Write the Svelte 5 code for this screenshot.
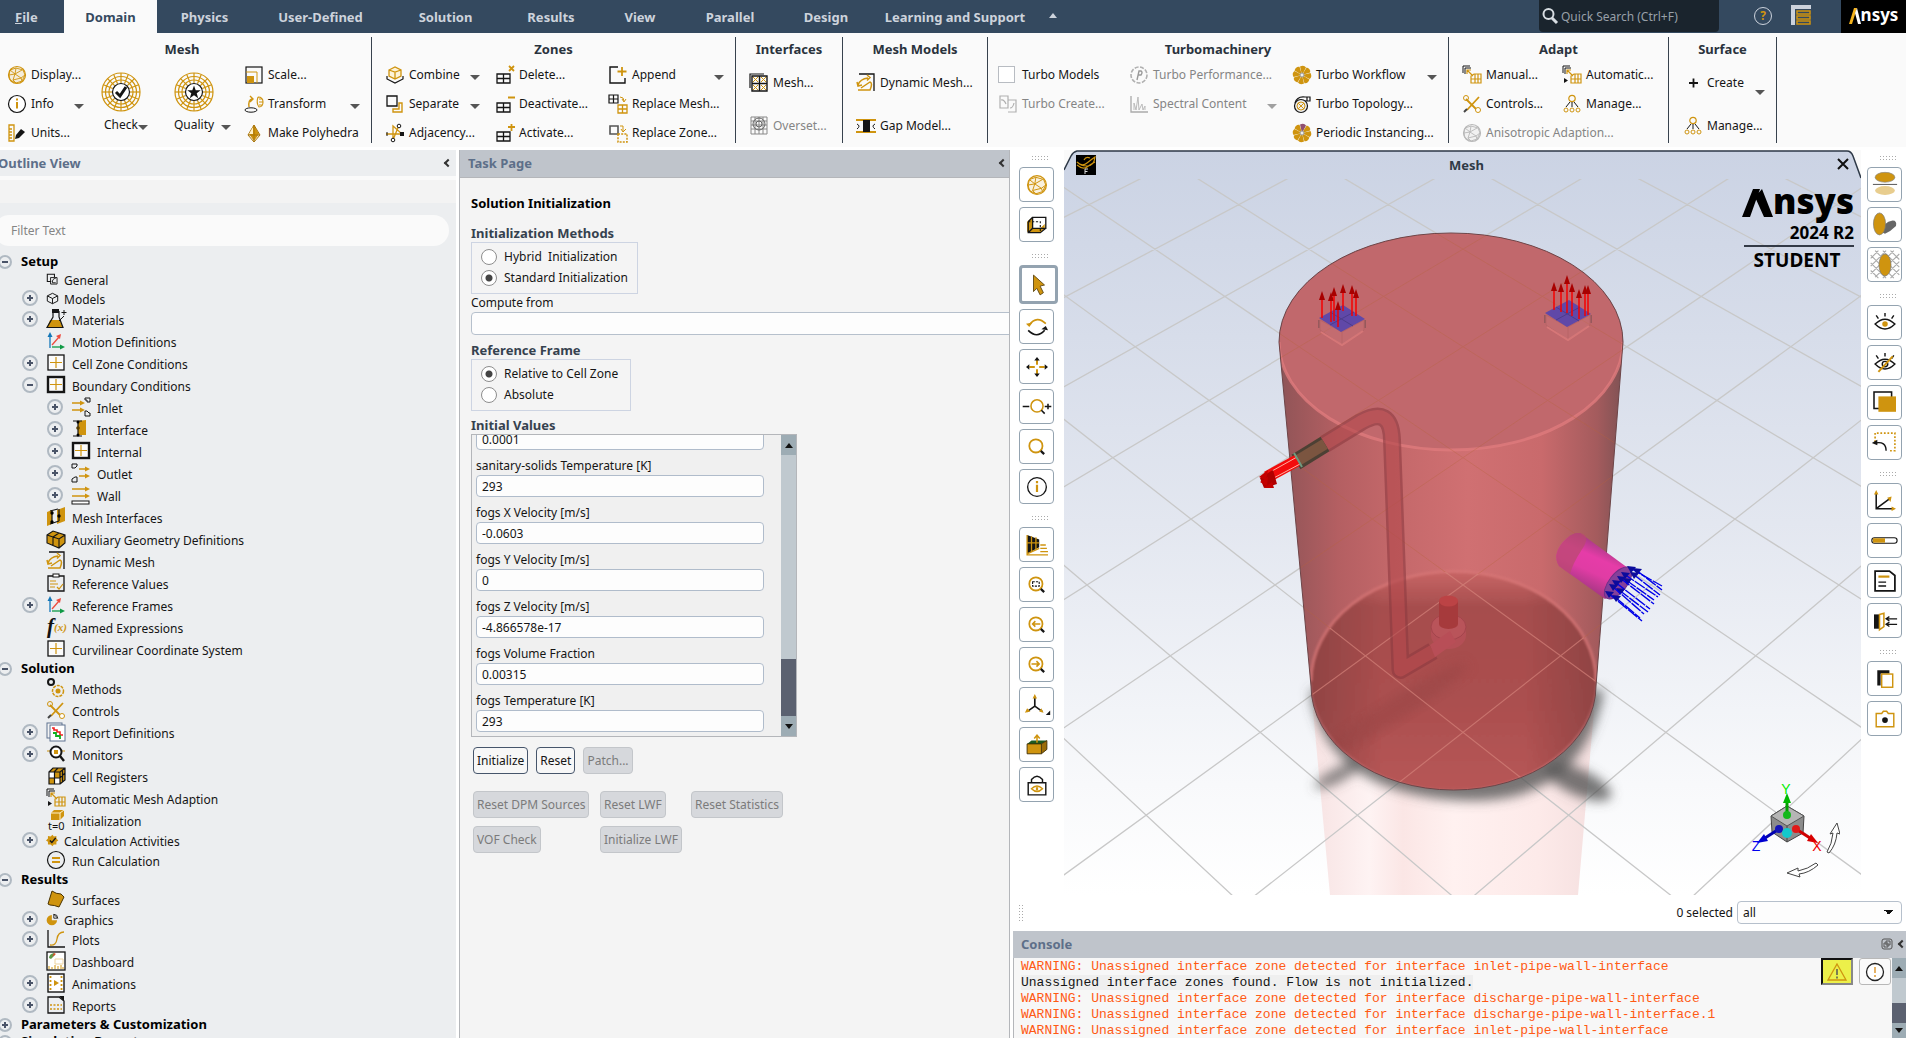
<script lang="ts">
  const G = '#cf940f';
  const K = '#151515';

  const line = (d: string, color = G, width = 1) =>
    `<path d="${d}" fill="none" stroke="${color}" stroke-width="${width}"/>`;
  const fill = (d: string, color = G) => `<path d="${d}" fill="${color}"/>`;
  const grid = (c: string) => line('M2 9h13v9H2zM8.500 9v9M2 13.500h13', c, 1.3);
  const lens = `<circle cx="9" cy="9" r="6" fill="none" stroke="${G}" stroke-width="1.600"/>` + line('M13.500 13.500l3 3', K, 2);

  const fan = (last: string) =>
    [0, 45, 90, 135, 180, 225, 270, 315]
      .map((a) => `<path d="M10 10L8 1.500q4-2 6 1z" fill="${a === 0 ? last : G}" transform="rotate(${a} 10 10)"/>`)
      .join('') + '<circle cx="10" cy="10" r="2" fill="#eee" stroke="#999"/>';

  const sphere = (c: string) =>
    `<circle cx="10" cy="10" r="8.500" fill="${c}22" stroke="${c}" stroke-width="1.200"/>` +
    line('M3 5l6-2 7 2 2 5-3 6-6 2-6-3-1-5zM3 5l5 4 1-6M8 9l7-4M8 9l6 4 4-3M14 13l1 3M8 9l-2 6 8-2M2 10l6-1M6 15l3 3', c, 0.9);

  const web = (mark: string) =>
    [19, 15.5, 12].map((r) => `<circle cx="20" cy="20" r="${r}" fill="none" stroke="${G}" stroke-width="1.200"/>`).join('') +
    Array.from({ length: 16 }, (_, i) => `<path d="M20 1v10" stroke="${G}" stroke-width="1.200" transform="rotate(${i * 22.5} 20 20)"/>`).join('') +
    `<circle cx="20" cy="20" r="8.500" fill="#fff" stroke="${K}" stroke-width="1.200"/>` + mark;

  const adapt = line('M1 8V1h7M3 9V3h6', K) + line('M5 5l6 6M5 9V5h4M9 18V11l3-2h7v9zM9 14h10M13 9v9M16 9v9', G, 1.2);
  const tools = line('M4 5l12 12M5 16L17 3', G, 1.8) + line('M2 18l3-3', '#444', 2) +
    `<circle cx="4" cy="4" r="2.500" fill="none" stroke="${G}"/><circle cx="16" cy="16" r="2.500" fill="#fff" stroke="${G}"/>`;
  const tree3 = `<circle cx="10" cy="4.500" r="3.200" fill="none" stroke="${G}" stroke-width="1.200"/>` +
    [4, 10, 16].map((x) => `<circle cx="${x}" cy="16" r="2" fill="none" stroke="${G}"/>`).join('') +
    line('M8 8l-4 5M10 8v5M12 8l4 5', K);
  const axes = line('M4 17V4', '#1477b8', 1.3) + fill('M1.500 6L4 1l2.500 5z', '#1477b8') +
    line('M6 16h9', '#0f9a45', 1.3) + fill('M14 13.500l5 2.500-5 2.500z', '#0f9a45') +
    line('M6 14l7-8', '#ee4b3e', 1.3) + fill('M15 3l-1 5-4-3z', '#ee4b3e');
  const dynamic = line('M3 1h15v17', K, 1.3) + line('M2 17h12q3-7 0-8l-9 6M2 12q2-6 10-7M11 2l3 2.500-3 3M1 9l1 4 4-1', G, 1.5);
  const arrowsR = line('M1 6h11M1 13h11', G, 1.3) + fill('M9 3.500l5 2.500-5 2.500zM9 10.500l5 2.500-5 2.500z');
  const box = (w: number) => `<rect x="2" y="2" width="16" height="15" fill="#fbfbfb" stroke="${K}" stroke-width="${w}"/>` + line('M10 4v11M4 9.500h12', G, 1.2);
  const eye = line('M1 11q9-9 18 0-9 9-18 0zM10 4V1M4 6L2 3M16 6l2-3', K, 1.3);

  const icons: Record<string, string> = {
    sphere: sphere(G),
    info: `<circle cx="10" cy="10" r="8.500" fill="#fff" stroke="${K}" stroke-width="1.200"/>` + fill('M9 8h2v6.500H9zM9 4.500h2v2H9z'),
    units: line('M2 2h5v16H2zM2 6h3M2 9h3M2 12h3M2 15h3', G, 1.3) + fill('M8 16l1-4 5-6 4 3-6 6z', K),
    scale: `<rect x="2" y="2" width="16" height="16" fill="none" stroke="${K}" stroke-width="1.200"/>` + line('M2 7h11v11') + fill('M3 11h7v7H3z'),
    transform: line('M5 13q-1-7 3-8M6 2l3 3-3 3', G, 1.4) + line('M14 3q5 0 5 5t-4 5q-3-4-1-10M15 5h3M15 8h4M15 11h3', G, 1.1) +
      `<ellipse cx="7" cy="16" rx="6" ry="2.200" fill="none" stroke="${K}"/>`,
    poly: fill('M10 2l5 9-5 7-5-7z') + line('M10 2l6 10-6 7-6-7zM4 12h12M10 2v17', '#a8740a', 1) + fill('M9 4L5 11h4z', '#fff0c8'),
    combine: fill('M4 5l6-3 6 3v6l-6 3-6-3z', '#fdf3da') + line('M4 5l6-3 6 3v6l-6 3-6-3zM4 5l6 2 6-2M10 7v7', G, 1.3) + line('M2 11v3l8 4 8-4v-3', K, 1.2),
    separate: line('M2 2h10v10H2z', K, 1.3) + line('M17 9v9H8v-3h6V9z', G, 1.4),
    adjacency: line('M1 11h16L8 3v14L14 2', G, 1.3) + `<circle cx="14" cy="3" r="1.800" fill="#fff" stroke="${K}"/><circle cx="8" cy="17" r="1.800" fill="#fff" stroke="${K}"/>` + fill('M15 9h4v4h-4z', K) + line('M2 9v4', K),
    delete: grid(K) + line('M14 1l5 5M19 1l-5 5', G, 1.8),
    deactivate: grid(K) + line('M13 3.500h7', G, 2),
    activate: grid(K) + line('M13 4h7M16.500 1v7', G, 1.8),
    append: line('M10 2H2v16h15v-5', K, 1.4) + line('M14 2v9M9.500 6.500h9', G, 1.8),
    rmesh: line('M1 1h9v8H1zM5.500 1v8M1 5h9', K, 1.2) + line('M10 11h9v8h-9zM14.500 11v8M10 15h9', G, 1.3) + line('M12 3q4 0 4 4M14 5l2 3 2-3', G),
    rzone: line('M2 3h8v8H2z', '#555', 1.6) + `<path d="M10 11h9v8h-9z" fill="none" stroke="${G}" stroke-width="1.500" stroke-dasharray="2 1.200"/>` + line('M12 3h3v5M13 6l2 3 3-3', G),
    imesh: line('M1 15V1h14', K, 1.2) + line('M3 3h15v15H3zM10.500 3v15M3 10.500h15', K, 1.4) + line('M4 4l5 5M9 4L4 9M12 4l5 5M17 4l-5 5M4 12l5 5M9 12l-5 5M12 12l5 5M17 12l-5 5', G),
    overset: line('M2 1h16v17H2zM2 5h16M2 9h16M2 13h16M6 1v17M10 1v17M14 1v17', '#888') + '<circle cx="10" cy="8" r="6" fill="none" stroke="#666"/><circle cx="10" cy="8" r="3" fill="none" stroke="#666"/>',
    dynamic,
    gap: line('M0 4h20M0 16h20', G, 2) + fill('M7 4h7v12H7z', K) + line('M1 8q4 2 0 5M19 8q-4 2 0 5', K),
    tcreate: line('M2 2h8v12H2zM10 6h8v12h-8M3 6q3-1 5 4M12 14q3 0 4-5', '#b0b0b0', 1.2),
    tperf: '<circle cx="10" cy="10" r="8" fill="none" stroke="#b0b0b0" stroke-width="1.600" stroke-dasharray="4 1.500"/>' + line('M8 15l2-9h2q2 1 0 4H9', '#999', 1.4),
    spectral: line('M2 2v16h17', '#aaa', 1.3) + line('M5 16V9l2 7 2-13 1 13 3-6 1 6 2-4v4', '#bbb'),
    fan: fan(G),
    fan2: fan('#905070'),
    topo: `<circle cx="9" cy="12" r="6.500" fill="#eee" stroke="${K}" stroke-width="1.200"/><circle cx="9" cy="12" r="4" fill="none" stroke="${G}"/>` + line('M3 9q2-7 10-6h5v4h-5M15 3v4', K, 1.2) + line('M6 9l6 6M12 9l-6 6', G),
    adapt,
    adapt2: adapt + fill('M2 13l4 2.500L2 18z', K),
    tools,
    tree3,
    aniso: sphere('#b8b8b8'),
    plus: line('M6 10h9M10.500 5.500v9', K, 1.8),
    general: line('M8 13H2V2h11v4', K, 1.6) + line('M7 7h10v10H7zM15 8q-6 1-5 7h5', K, 1.4),
    models: line('M2 6l8-4 8 4v8l-8 4-8-4zM2 6l8 4 8-4M10 10v8', K, 1.5),
    materials: fill('M4 11h10l3 8H1z') + line('M7 2v6L1 18.500h16L13 8V2', K, 1.2) + fill('M6 0h7v4H6z', K) + line('M18 1v5M15.500 3.500h5M13 12l5-5', K),
    axes,
    box: box(1.3),
    boxBold: box(2.4),
    inlet: arrowsR + line('M14 1h5v4h-3v-2h-2zM14 14h2l2 2h1v3h-5z', K),
    interface: fill('M7 2l8-1v15H7z') + line('M2 2h9M2 17h9M7 2v15', K, 1.2) + '<circle cx="7" cy="3" r="1.500"/><circle cx="7" cy="9" r="1.800" fill="#553c00"/><circle cx="7" cy="16" r="1.500"/>',
    outlet: line('M1 1h5v2l-2 2H1zM1 19v-3l3-2h2v5z', K) + line('M8 6h8M8 13h8', G, 1.3) + fill('M14 3.500l5 2.500-5 2.500zM14 10.500l5 2.500-5 2.500z'),
    wall: line('M1 4h15M1 11h15', G, 1.3) + fill('M14 1.500l5 2.500-5 2.500zM14 8.500l5 2.500-5 2.500z') + `<rect x="1" y="16" width="17" height="3" fill="#fff" stroke="${K}"/>`,
    minterf: fill('M1 5l5-2v14l-5 2zM11 3l8-3v14l-8 3z') + line('M4 4l8-2M4 17l9-3M6 4v13M13 2v12', K, 1.2) + '<circle cx="6" cy="6" r="1.700"/><circle cx="13" cy="9" r="1.700"/><circle cx="6" cy="15" r="1.700"/>',
    aux: fill('M1 6l6-4 12 4v8l-6 5-12-5z') + line('M1 6l6-4 12 4v8l-6 5-12-5zM1 6l12 4 6-4M13 10v9M7 8v8M7 8l6-4', K, 1.1),
    refval: line('M2 3h16v15H2z', K, 1.3) + `<rect x="7" y="1" width="6" height="3" fill="#fff" stroke="${K}"/>` + line('M4 8h6M4 11h8M4 14h5M11 14l2 2 4-5', G, 1.2),
    fx: '<text x="1" y="16" font-family="Liberation Serif, serif" font-style="italic" font-weight="bold" font-size="21" fill="#111">f</text><text x="8" y="14" font-family="Liberation Serif, serif" font-style="italic" font-weight="bold" font-size="11" fill="#cf940f">(x)</text>',
    methods: `<circle cx="5" cy="4" r="3" fill="none" stroke="${K}" stroke-width="2"/><circle cx="12" cy="13" r="5.500" fill="none" stroke="${G}" stroke-width="1.500" stroke-dasharray="3 1"/><circle cx="12" cy="13" r="2.500" fill="${G}"/>`,
    report: '<rect x="1" y="1" width="15" height="15" fill="#f4f4f4" stroke="#5f7390"/><rect x="4" y="3" width="15" height="16" fill="#fff" stroke="#5f7390"/>' + line('M6 6h2v2h3v2h3v3h3', '#f02020', 1.6) + line('M7 11h3v3h4v3', '#10b020', 1.8),
    monitors: line('M1 7h4M15 7h4') + `<circle cx="10" cy="8" r="5.500" fill="#fff" stroke="${K}" stroke-width="2"/>` + line('M14 12l4 5', K, 2.4) + fill('M8 6h4v4H8z'),
    cells: fill('M3 6l4-4h12v12l-5 4H3z') + fill('M3 6h5v6H3zM9 12h5v6H9z', '#fff') + line('M3 6h11v12H3zM3 6l4-4h12v12l-5 4M14 6l5-4M8.500 6v12M3 12h11l5-5M12 2L8 6M16.500 4v12', K, 1.2),
    initial: fill('M5 3l3-3h10v6l-4 4H5z') + line('M5 3h9v7M14 3l4-3', '#fff0c8', 1) + '<text x="2" y="20" font-family="Noto Sans, sans-serif" font-size="11" fill="#111">t=0</text>',
    calc: fill('M10 1l2 3 4-1 0 4 3 3-3 2 0 4-4 0-2 3-3-3-4 0 0-4-3-2 3-3 0-4 4 1z') + line('M6 10l3 3 6-7', K, 2.2),
    run: `<circle cx="10" cy="10" r="8.500" fill="none" stroke="${K}" stroke-width="1.200"/>` + line('M6 8h8M6 12h8', G, 2),
    surfaces: fill('M6 2q4 3 9 3l3 3-5 10q-5-2-9-2l-2-1z') + line('M6 2q4 3 9 3l3 3-5 10q-5-2-9-2l-2-1z', '#4a3300'),
    graphics: fill('M9 4v7h8a8 8 0 1 1-8-8z') + line('M12 2q6 0 6 6h-6zM12 2l6 6', K, 1.3),
    plots: line('M2 1v17h17', K, 1.3) + line('M4 16q6 1 7-6t7-7', G, 1.3),
    dashboard: `<rect x="1" y="1" width="18" height="18" fill="#fff" stroke="${K}" stroke-width="1.300"/>` + fill('M3 7q0-4 5-5l1 2-4 4z', '#5d9b48') + fill('M8 2l2 1-4 3z', '#e04a2a') + line('M3 18v-3M6 18v-2M9 18v-4M12 18v-3M15 18v-4M17 18v-2') + line('M9 8h8v5H9z', '#ecd3a0'),
    animations: `<rect x="2" y="1" width="16" height="18" fill="#fff" stroke="${K}" stroke-width="1.400"/>` + fill('M8 7l5 3-5 3z') + `<path d="M4.500 3v15M15.500 3v15" stroke="${G}" stroke-width="1.800" stroke-dasharray="2 2"/>`,
    reports: line('M2 2h11l5 4v12H2z', K, 1.3) + fill('M13 1h5v5z', K) + `<path d="M4 10h12M4 14h12" stroke="${G}" stroke-width="1.500" stroke-dasharray="2 1.500"/>`,
    cube: fill('M1 7l5-4v11l-3 3-2-1z') + fill('M2 13h11l4-4v4l-4 4H3z') + line('M6 3h12v10h-12zM2 7l4-4M2 7v10h11l5-4M6 13l-4 4', K, 1.2) + `<path d="M2 7h11v10" fill="none" stroke="${K}" stroke-dasharray="2 1.500"/>`,
    pointer: `<path d="M5 1l10 9-4 1 3 6-3 2-3-6-3 3z" fill="${G}" stroke="#5a4310" stroke-width=".8"/>`,
    rotate: line('M3 8q7-9 15 -1', G, 1.5) + fill('M0 7l6-1-3 4z') + line('M2 13q8 8 15 0', K, 1.5) + fill('M20 13l-6-1 4-3z', K),
    pan: line('M3 10h5M12 10h5M10 3v5M10 12v5', G, 1.8) + fill('M10 1l2.500 3h-5zM10 19l2.500-3h-5zM0 10l3-2.500v5zM20 10l-3-2.500v5z', K),
    zoom: `<circle cx="10" cy="9" r="5.500" fill="none" stroke="${G}" stroke-width="1.400"/>` + line('M14 13l3 3M-3 9.500h6M17 9.500h6M20 7v5', K, 1.4),
    lens,
    persp: fill('M1 1l11 4v7L1 18z', K) + line('M1 1v18h19M1 18l11-5M5 2v14M9 3v11M1 8h11M13 10h5M13 13h6M13 16h7', G, 1.2),
    fit: lens + `<path d="M6 7h6v4H6z" fill="none" stroke="${K}" stroke-dasharray="2 1"/>`,
    back: lens + line('M6 9h7M8.500 6.500L6 9l2.500 2.500', G, 1.4),
    forward: lens + line('M5 9h7M9.500 6.500L12 9l-2.500 2.500', G, 1.4),
    triad: line('M8 3v8M8 11l-7 5M8 11l7 5', K, 1.5) + fill('M8 0l2 4h-4zM-1 17l2-4 3 3zM16 17l-4-1 2-3z') + fill('M22 15v4h-4z', K),
    iso: fill('M1 9h13v9H1z') + fill('M1 9l4-3h14l-5 3z', '#1e5a20') + fill('M14 9l5-3v8l-5 4z', '#9a6c08') + line('M1 9h13v9H1zM14 9l5-3v8l-5 4', '#3d2b00', 0.8) + line('M10 8V2M7.500 4L10 1l2.500 3', G, 1.4),
    lock: line('M2 8h16v11H2zM5 8V5q5-6 10 0v3', K, 1.3) + line('M5 13.500q5-5 10 0-5 5-10 0z', G, 1.3) + fill('M9 12h2v3H9z'),
    mirror: `<ellipse cx="10" cy="3" rx="9" ry="4.500" fill="${G}" stroke="#888" stroke-width=".6"/><ellipse cx="10" cy="15" rx="9" ry="4" fill="#e8cd8e"/>` + line('M-1 9.500h22', '#666'),
    shadow: '<path d="M8 17q0-10 9-11 4 0 3 5-5 5-10 7z" fill="#666"/>' + `<ellipse cx="5" cy="9" rx="5.500" ry="10" fill="${G}" stroke="#777" stroke-width=".6"/>`,
    hatch: line('M-3 4l7-7M-3 11L11-3M-3 18L18-3M1 21L23 0M8 22L23 7M15 22l8-8M-3 15l7 7M-3 8l14 14M-3 1l21 21M1-3l22 22M8-3l15 15M15-3l8 8', '#aaa') + `<ellipse cx="10" cy="10" rx="5.500" ry="10" fill="${G}" stroke="#777" stroke-width=".6"/>`,
    eye: eye + `<circle cx="10" cy="11" r="2.500" fill="${G}"/>`,
    eyeOff: eye + `<circle cx="10" cy="11" r="2.500" fill="none" stroke="${K}" stroke-width="1.300"/>` + line('M4 18L17 4', G, 1.8),
    front: `<rect x="0" y="0" width="16" height="15" fill="#fff" stroke="${K}" stroke-width="1.400"/>` + fill('M4 4h16v14H4z'),
    undoBox: `<path d="M1 9V1h18v16h-6" fill="none" stroke="${G}" stroke-width="1.500" stroke-dasharray="1.600 1.600"/>` + line('M1 10q10-2 10 7', K, 1.3) + fill('M-2 10l5-3v5z', K),
    axes3: line('M2 3v14h15M2 17l12-9', K, 1.4) + fill('M2 0l2 4H0zM20 17l-4-2v4zM16 6l-1 5-3-4z'),
    ruler: `<rect x="-2" y="7" width="23" height="5" rx="2.500" fill="#fff" stroke="${K}"/>` + fill('M-1 7.500h11v4H-1z'),
    note: line('M1 1h13l5 4v14H1z', K, 1.6) + line('M4 6h10', G, 2) + line('M4 11h7M4 14.500h7', K, 1.3),
    flow: fill('M0 4h5v13H0z', K) + line('M5 4l4-1v12l-4 3z', G, 1.4) + line('M11 8h10M11 13h10M14 6l-3 2 3 2M14 11l-3 2 3 2', K, 1.2),
    copy: fill('M3 2h11v3H6v11H3z', K) + `<rect x="7" y="5.500" width="10" height="12" fill="#fff" stroke="${G}" stroke-width="1.300"/>`,
    camera: line('M2 5h5l1.500-2h3L13 5h5v12H2z', G, 1.3) + `<circle cx="10" cy="11" r="2.600" fill="${K}"/>`
  };

  const tabs = ['File', 'Domain', 'Physics', 'User-Defined', 'Solution', 'Results', 'View', 'Parallel', 'Design', 'Learning and Support'];

  type Tool = { icon?: string; label: string; arrow?: boolean; off?: boolean; check?: boolean; big?: string };
  const star = fill('M20 13.500l1.700 4.800h5l-4 3 1.500 5-4.200-3-4.200 3 1.500-5-4-3h5z', K);
  const groups: { name: string; cls: string; cols: Tool[][] }[] = [
    { name: 'Mesh', cls: 'mesh', cols: [
      [{ icon: 'sphere', label: 'Display...' }, { icon: 'info', label: 'Info', arrow: true }, { icon: 'units', label: 'Units...' }],
      [{ label: 'Check', big: web(line('M15 20l4 4 6-9', K, 3)) }],
      [{ label: 'Quality', big: web(star) }],
      [{ icon: 'scale', label: 'Scale...' }, { icon: 'transform', label: 'Transform', arrow: true }, { icon: 'poly', label: 'Make Polyhedra' }]
    ] },
    { name: 'Zones', cls: 'zones', cols: [
      [{ icon: 'combine', label: 'Combine', arrow: true }, { icon: 'separate', label: 'Separate', arrow: true }, { icon: 'adjacency', label: 'Adjacency...' }],
      [{ icon: 'delete', label: 'Delete...' }, { icon: 'deactivate', label: 'Deactivate...' }, { icon: 'activate', label: 'Activate...' }],
      [{ icon: 'append', label: 'Append', arrow: true }, { icon: 'rmesh', label: 'Replace Mesh...' }, { icon: 'rzone', label: 'Replace Zone...' }]
    ] },
    { name: 'Interfaces', cls: 'interfaces', cols: [
      [{ icon: 'imesh', label: 'Mesh...' }, { icon: 'overset', label: 'Overset...', off: true }]
    ] },
    { name: 'Mesh Models', cls: 'models', cols: [
      [{ icon: 'dynamic', label: 'Dynamic Mesh...' }, { icon: 'gap', label: 'Gap Model...' }]
    ] },
    { name: 'Turbomachinery', cls: 'turbo', cols: [
      [{ check: true, label: 'Turbo Models' }, { icon: 'tcreate', label: 'Turbo Create...', off: true }],
      [{ icon: 'tperf', label: 'Turbo Performance...', off: true }, { icon: 'spectral', label: 'Spectral Content', off: true, arrow: true }],
      [{ icon: 'fan', label: 'Turbo Workflow', arrow: true }, { icon: 'topo', label: 'Turbo Topology...' }, { icon: 'fan2', label: 'Periodic Instancing...' }]
    ] },
    { name: 'Adapt', cls: 'adapt', cols: [
      [{ icon: 'adapt', label: 'Manual...' }, { icon: 'tools', label: 'Controls...' }, { icon: 'aniso', label: 'Anisotropic Adaption...', off: true }],
      [{ icon: 'adapt2', label: 'Automatic...' }, { icon: 'tree3', label: 'Manage...' }]
    ] },
    { name: 'Surface', cls: 'surface', cols: [
      [{ icon: 'plus', label: 'Create', arrow: true }, { icon: 'tree3', label: 'Manage...' }]
    ] }
  ];

  // level, label, icon, expander
  type Row = [number, string, string?, ('+' | '-')?];
  const tree: Row[] = [
    [0, 'Setup', '', '-'],
    [1, 'General', 'general'],
    [1, 'Models', 'models', '+'],
    [1, 'Materials', 'materials', '+'],
    [1, 'Motion Definitions', 'axes'],
    [1, 'Cell Zone Conditions', 'box', '+'],
    [1, 'Boundary Conditions', 'boxBold', '-'],
    [2, 'Inlet', 'inlet', '+'],
    [2, 'Interface', 'interface', '+'],
    [2, 'Internal', 'boxBold', '+'],
    [2, 'Outlet', 'outlet', '+'],
    [2, 'Wall', 'wall', '+'],
    [1, 'Mesh Interfaces', 'minterf'],
    [1, 'Auxiliary Geometry Definitions', 'aux'],
    [1, 'Dynamic Mesh', 'dynamic'],
    [1, 'Reference Values', 'refval'],
    [1, 'Reference Frames', 'axes', '+'],
    [1, 'Named Expressions', 'fx'],
    [1, 'Curvilinear Coordinate System', 'box'],
    [0, 'Solution', '', '-'],
    [1, 'Methods', 'methods'],
    [1, 'Controls', 'tools'],
    [1, 'Report Definitions', 'report', '+'],
    [1, 'Monitors', 'monitors', '+'],
    [1, 'Cell Registers', 'cells'],
    [1, 'Automatic Mesh Adaption', 'adapt2'],
    [1, 'Initialization', 'initial'],
    [1, 'Calculation Activities', 'calc', '+'],
    [1, 'Run Calculation', 'run'],
    [0, 'Results', '', '-'],
    [1, 'Surfaces', 'surfaces'],
    [1, 'Graphics', 'graphics', '+'],
    [1, 'Plots', 'plots', '+'],
    [1, 'Dashboard', 'dashboard'],
    [1, 'Animations', 'animations', '+'],
    [1, 'Reports', 'reports', '+'],
    [0, 'Parameters & Customization', '', '+'],
    [0, 'Simulation Reports', '', '+']
  ];
  const smallIcons = ['general', 'models', 'calc', 'graphics'];

  let method = $state('standard');
  let frame = $state('relative');

  const fields = [
    ['Volume Fraction', '0.0001'],
    ['sanitary-solids Temperature [K]', '293'],
    ['fogs X Velocity [m/s]', '-0.0603'],
    ['fogs Y Velocity [m/s]', '0'],
    ['fogs Z Velocity [m/s]', '-4.866578e-17'],
    ['fogs Volume Fraction', '0.00315'],
    ['fogs Temperature [K]', '293']
  ];

  const leftTools = [['sphere', 'cube'], ['pointer', 'rotate', 'pan', 'zoom', 'lens', 'info'], ['persp', 'fit', 'back', 'forward', 'triad', 'iso', 'lock']];
  const rightTools = [['mirror', 'shadow', 'hatch'], ['eye', 'eyeOff', 'front', 'undoBox'], ['axes3', 'ruler', 'note', 'flow'], ['copy', 'camera']];

  const log = [
    'WARNING: Unassigned interface zone detected for interface inlet-pipe-wall-interface',
    'Unassigned interface zones found. Flow is not initialized.',
    'WARNING: Unassigned interface zone detected for interface discharge-pipe-wall-interface',
    'WARNING: Unassigned interface zone detected for interface discharge-pipe-wall-interface.1',
    'WARNING: Unassigned interface zone detected for interface inlet-pipe-wall-interface'
  ];

  // ground plane in perspective: row k, column m
  const node = (k: number, m: number) => {
    const depth = 1 / (0.0006754 - 0.00001972 * k);
    return `${399 + m * 0.0505 * depth} ${depth - 1426}`;
  };
  let floor = '';
  for (let c = -17; c <= 17; c += 2) {
    floor += `M${node(-2, c - 2)}L${node(12, c + 12)}M${node(-2, c + 2)}L${node(12, c - 12)}`;
  }

  const vents = [
    { x: 278, y: 168, arrows: [[-20, -27, 0], [-11, -26, 4], [-8, -31, 3], [-4, -17, 9], [1, -34, -7], [10, -33, -2], [14, -29, -2]] },
    { x: 504, y: 163, arrows: [[-14, -31, -3], [-7, -30, -1], [-1, -38, 0], [4, -30, 3], [11, -24, 6], [17, -28, 3], [20, -28, 2]] }
  ];
  const jets = [
    [566, 418, 598, 436], [572, 420, 598, 440], [569, 424, 596, 445], [560, 424, 594, 447], [562, 430, 590, 450], [556, 428, 590, 454],
    [551, 432, 586, 459], [555, 440, 584, 462], [548, 436, 580, 464], [544, 443, 578, 471], [551, 447, 576, 468]
  ];
</script>

{#snippet icon(name: string)}
  <svg class="icon" viewBox="0 0 20 20" aria-hidden="true">{@html icons[name]}</svg>
{/snippet}

{#snippet strip(sets: string[][])}
  <div class="strip">
    {#each sets as set}
      <div class="strip-group">
        <span class="grip"></span>
        {#each set as name}
          <button class="view-btn" class:active={name === 'pointer'} aria-label={name}>{@render icon(name)}</button>
        {/each}
      </div>
    {/each}
  </div>
{/snippet}

<div class="app">
  <header class="tabbar">
    <nav class="tabs">
      {#each tabs as tab}
        <button class="tab" class:file={tab === 'File'} class:selected={tab === 'Domain'}>
          {#if tab === 'File'}<u>F</u>ile{:else}{tab}{/if}
        </button>
      {/each}
      <button class="tab" aria-label="Collapse ribbon"><span class="up"></span></button>
    </nav>
    <label class="search">
      <svg width="18" height="18" viewBox="0 0 18 18"><circle cx="7.500" cy="7" r="5" fill="none" stroke="#d8dde2" stroke-width="2" /><path d="M11 11l5 5" stroke="#d8dde2" stroke-width="3" /></svg>
      <input type="text" aria-label="Quick Search" placeholder="Quick Search (Ctrl+F)" />
    </label>
    <button class="help" aria-label="Help">?</button>
    <button class="layout-btn" aria-label="Layout">
      <svg width="20" height="20" viewBox="0 0 20 20"><path d="M0 0h20v4H4v16H0z" fill="#ccd2dc" /><path d="M6 6h13v3H6zM6 11h13v3H6zM6 16h13v3H6z" fill="none" stroke="#cf940f" stroke-width="1.500" /></svg>
    </button>
    <div class="brand">
      <svg width="12" height="17" viewBox="0 0 12 17"><path d="M0 17L5 1h3L3 17z" fill="#f5b31c" /><path d="M8 1l4 16H9L6 6z" fill="#fff" /></svg><b>nsys</b>
    </div>
  </header>

  <section class="ribbon">
    {#each groups as group}
      <div class="group {group.cls}">
        <h2>{group.name}</h2>
        <div class="cols">
          {#each group.cols as col}
            <div class="col">
              {#each col as tool}
                {#if tool.big}
                  <button class="big">
                    <svg width="40" height="40" viewBox="0 0 40 40">{@html tool.big}</svg>
                    <span class="big-label">{tool.label}<span class="down"></span></span>
                  </button>
                {:else if tool.check}
                  <label class="tool"><input type="checkbox" />{tool.label}</label>
                {:else}
                  <button class="tool" disabled={tool.off}>
                    {@render icon(tool.icon ?? '')}{tool.label}
                    {#if tool.arrow}<span class="down"></span>{/if}
                  </button>
                {/if}
              {/each}
            </div>
          {/each}
        </div>
      </div>
    {/each}
  </section>

  <main class="workspace">
    <aside class="outline">
      <div class="dock-title light"><span class="cut">Outline View</span><span class="chev"></span></div>
      <div class="blank"></div>
      <input class="filter" type="text" aria-label="Filter Text" placeholder="Filter Text" />
      <ul class="tree">
        {#each tree as [level, label, name, exp]}
          <li class="row level{level}" class:small={smallIcons.includes(name ?? '')} class:mid={name === 'models'}>
            {#if exp}<button class="exp" class:minus={exp === '-'} aria-label="Toggle {label}"></button>{:else}<span class="no-exp"></span>{/if}
            {#if name}{@render icon(name)}{/if}
            <span class="row-label">{label}</span>
          </li>
        {/each}
      </ul>
    </aside>

    <section class="task">
      <div class="dock-title">Task Page<span class="chev"></span></div>
      <div class="task-body">
        <h3 class="page-title">Solution Initialization</h3>

        <h4>Initialization Methods</h4>
        <div class="radios">
          <label><input type="radio" value="hybrid" bind:group={method} />Hybrid&nbsp; Initialization</label>
          <label><input type="radio" value="standard" bind:group={method} />Standard Initialization</label>
        </div>
        <label class="compute">Compute from
          <select><option></option></select>
        </label>

        <h4>Reference Frame</h4>
        <div class="radios narrow">
          <label><input type="radio" value="relative" bind:group={frame} />Relative to Cell Zone</label>
          <label><input type="radio" value="absolute" bind:group={frame} />Absolute</label>
        </div>

        <h4 class="iv">Initial Values</h4>
        <div class="values">
          <div class="fields">
            {#each fields as [label, value]}
              <label class="field">{label}<input type="text" {value} /></label>
            {/each}
          </div>
          <div class="scroll"><span class="cap"><i class="tri-up"></i></span><span class="thumb"></span><span class="cap"><i class="tri-down"></i></span></div>
        </div>

        <div class="actions">
          <button class="btn">Initialize</button>
          <button class="btn">Reset</button>
          <button class="btn" disabled>Patch...</button>
        </div>
        <div class="more">
          <button class="btn" disabled>Reset DPM Sources</button>
          <button class="btn" disabled>Reset LWF</button>
          <button class="btn" disabled>Reset Statistics</button>
          <button class="btn" disabled>VOF Check</button>
          <button class="btn" disabled>Initialize LWF</button>
        </div>
      </div>
    </section>

    <section class="right">
      <div class="graphics">
        {@render strip(leftTools)}
        <div class="view">
          <svg class="scene" viewBox="0 0 797 745" preserveAspectRatio="xMidYMid slice" aria-label="Mesh view">
            <defs>
              <linearGradient id="sky" x2="0" y2="1"><stop offset="0" stop-color="#cbd3e4" /><stop offset=".5" stop-color="#e3e7f0" /><stop offset=".85" stop-color="#f8f9fb" /><stop offset="1" stop-color="#fff" /></linearGradient>
              <linearGradient id="body"><stop offset="0" stop-color="#7a5558" /><stop offset=".07" stop-color="#965659" /><stop offset=".2" stop-color="#b45f62" /><stop offset=".35" stop-color="#c4686a" /><stop offset=".55" stop-color="#d07072" /><stop offset=".75" stop-color="#c96a6c" /><stop offset=".9" stop-color="#a45b5d" /><stop offset="1" stop-color="#6f4e50" /></linearGradient>
              <linearGradient id="bottom" x2="0" y2="1"><stop offset="0" stop-color="#c76565" /><stop offset=".16" stop-color="#a64e4e" /><stop offset=".6" stop-color="#ab4f4f" /><stop offset="1" stop-color="#b75656" /></linearGradient>
              <linearGradient id="sides"><stop offset="0" stop-color="#773838" stop-opacity=".5" /><stop offset=".25" stop-color="#773838" stop-opacity="0" /><stop offset=".75" stop-color="#773838" stop-opacity="0" /><stop offset="1" stop-color="#773838" stop-opacity=".5" /></linearGradient>
              <linearGradient id="echo"><stop offset="0" stop-color="#f7e3e3" /><stop offset=".2" stop-color="#fef3f3" /><stop offset=".32" stop-color="#fbe6e5" /><stop offset=".5" stop-color="#fff1f0" /><stop offset=".8" stop-color="#fdeae9" /><stop offset="1" stop-color="#f5e0e0" /></linearGradient>
              <linearGradient id="pink" x1=".7" y1=".1" x2=".3" y2=".9"><stop offset="0" stop-color="#8f3a78" /><stop offset=".35" stop-color="#e63ca8" /><stop offset=".6" stop-color="#e03ca4" /><stop offset="1" stop-color="#94357a" /></linearGradient>
              <filter id="soft" x="-30%" y="-30%" width="160%" height="160%"><feGaussianBlur stdDeviation="6" /></filter>
              <filter id="edge"><feGaussianBlur stdDeviation="1" /></filter>
              <clipPath id="ground"><path d="M0 29H797V745H0z" /></clipPath>
              <clipPath id="tank"><path d="M215 192A172 109 0 0 1 559 192L532 536A142.500 104 0 0 1 247 536z" /></clipPath>
              <clipPath id="base"><ellipse cx="389.500" cy="531" rx="142" ry="109" /></clipPath>
              <path id="floor" d={floor} />
            </defs>
            <path d="M0 745V20L7 6Q9 2 13 1H783Q787 1 789 6L797 28V745z" fill="url(#sky)" />
            <path d="M0 20L7 6Q9 2 13 1H783Q787 1 789 6L797 28" fill="none" stroke="#2e3947" stroke-width="1.500" />
            <path d="M249 560H530L514 745H266z" fill="url(#echo)" />
            <g clip-path="url(#ground)"><use href="#floor" stroke="#c8c8c8" stroke-width="1.300" /></g>
            <g filter="url(#soft)" fill="#555">
              <path d="M246 540Q260 640 389 650T540 540z" opacity=".8" />
              <ellipse cx="274" cy="625" rx="26" ry="7" transform="rotate(-28 274 625)" opacity=".7" />
              <ellipse cx="514" cy="632" rx="36" ry="13" transform="rotate(24 514 632)" opacity=".8" />
            </g>
            <g clip-path="url(#tank)">
              <path d="M200 70H570V650H200z" fill="url(#body)" />
              <g filter="url(#edge)">
                <ellipse cx="389.500" cy="531" rx="142" ry="109" fill="url(#bottom)" />
                <ellipse cx="389.500" cy="531" rx="142" ry="109" fill="url(#sides)" />
                <path d="M247 531A142 109 0 0 1 532 531" fill="none" stroke="#d97878" stroke-width="3" opacity=".7" />
              </g>
              <ellipse cx="387" cy="192" rx="172" ry="108" fill="#c1686c" />
              <path d="M215 192A172 108 0 0 0 559 192" fill="none" stroke="#de7b7d" stroke-width="3" opacity=".8" />
              <ellipse cx="330" cy="560" rx="86" ry="11" transform="rotate(-32 330 560)" fill="#964444" opacity=".5" filter="url(#soft)" />
              <use href="#floor" stroke="#b8653f" opacity=".35" />
            </g>
            <g clip-path="url(#base)"><use href="#floor" stroke="#e09090" stroke-width="1.200" opacity=".5" /></g>
            <path d="M215 192A172 109 0 0 1 559 192L532 536A142.500 104 0 0 1 247 536z" fill="none" stroke="#6d4548" />
            <g fill="none" stroke-linejoin="round">
              <g opacity=".6">
                <path d="M261 294L297 272Q327 255 328 290L336.500 520L369 501" stroke="#8e3a40" stroke-width="18" />
                <path d="M261 294L297 272Q327 255 328 290L336.500 520L369 501" stroke="#b3484c" stroke-width="13" />
              </g>
              <path d="M232 312L261 294" stroke="#4c4034" stroke-width="17" />
              <path d="M233 311L261 294" stroke="#7b5540" stroke-width="11" />
              <path d="M203 327L234 310" stroke="#f30c0c" stroke-width="12" />
              <path d="M208 321L233 307M206 330L236 314" stroke="#ffb0a0" />
              <path d="M230 303L238 317" stroke="#6f9a80" stroke-width="2" />
            </g>
            <path d="M196 328L209 320L213 334L200 338z" fill="#b00000" />
            <path d="M195 327l9-7-2 10zM196 332l8-5-1 9zM200 338l8-6 2 6z" fill="#c40000" />

            <g opacity=".9">
              <path d="M367 477V485A17.500 14 0 0 0 402 485V477z" fill="#b65058" />
              <ellipse cx="384.500" cy="477" rx="17.500" ry="13" fill="#bb555c" stroke="#a3444c" />
              <path d="M366 495L386 481L392 492L371 507z" fill="#ba4f59" />
            </g>
            <path d="M375 451V474A9.500 5 0 0 0 394 474V451z" fill="#a63a3c" />
            <ellipse cx="384.500" cy="451" rx="9.500" ry="5.500" fill="#bc4345" />

            {#each vents as vent}
              <g transform="translate({vent.x} {vent.y})">
                <path d="M-23 2V10M23 2V10" stroke="#6d4a4c" />
                <path d="M-22 2V12L0 27L22 12V2L0 14zM0 14V27" fill="#c9787a" fill-opacity=".3" stroke="#b86466" />
                <path d="M-21 14L0 27L21 13" fill="none" stroke="#e07e7e" stroke-width="2" opacity=".7" />
                <path d="M-23 0L1 -13L23 1L-1 14z" fill="#6048a8" />
                <path d="M-12 -6L11 8M12 -6L-12 7" stroke="#4d3c8c" />
                {#each vent.arrows as [x, top, base]}
                  <path d="M{x} {base}V{top + 7}" stroke="#f40000" stroke-width="1.500" />
                  <path d="M{x} {top}l3 9h-6z" fill="#a80000" />
                {/each}
              </g>
            {/each}

            <path d="M516 383L564 418Q570 435 541 449L495 416Q488 405 499 392Q508 382 516 383z" fill="url(#pink)" />
            <path d="M516 383Q528 385 517 401Q509 413 506 424L495 416Q488 405 499 392Q508 382 516 383z" fill="#ba4a70" opacity=".75" />
            <ellipse cx="554" cy="433" rx="9" ry="19" transform="rotate(38 554 433)" fill="#84409a" stroke="#6f3088" />
            {#each jets as [x1, y1, x2, y2]}
              <path d="M{x1} {y1}L{x2} {y2}" stroke="#0000e8" stroke-width="1.400" stroke-dasharray="12 1" />
              <path d="M{x1 - 3} {y1 - 2}l9 1-5 6z" fill="#0b0b9c" />
            {/each}
          </svg>

          <div class="view-title">
            <svg width="20" height="20" viewBox="0 0 20 20"><path d="M0 0h20v20H0z" /><path d="M1 7q5 5 10 1t8-6q-1 9-8 9T1 7zM1 10q6 5 10 2t8-5M8 5q2-4 6-2" fill="none" stroke="#cf940f" stroke-width="1.200" /><path d="M9 14h3M9 14v5M9 16.500h2.500" stroke="#ddd" fill="none" /></svg>
            <span>Mesh</span>
            <button aria-label="Close"><svg width="12" height="12" viewBox="0 0 12 12"><path d="M1 1l10 10M11 1L1 11" stroke="#111" stroke-width="2" /></svg></button>
          </div>

          <div class="logo">
            <div class="logo-name"><svg width="31" height="28" viewBox="0 0 31 28"><path d="M0 28L11 0h7L8 28zM13 8L20 0l11 28h-9z" /></svg><b>nsys</b></div>
            <div class="release">2024 R2</div>
            <div class="student">STUDENT</div>
          </div>

          <svg class="triad" width="92" height="96" viewBox="684 632 92 96">
            <path d="M723 656L740 666L739 683L723 692L708 682L707 666z" fill="#8c8c8c" stroke="#444" />
            <path d="M723 656L740 666L723 676L707 666z" fill="#b5b5b5" stroke="#555" />
            <path d="M723 676V692" stroke="#444" />
            <path d="M723 665V652" stroke="#00a000" stroke-width="3" /><path d="M723 643l4 10h-8z" fill="#00b800" />
            <path d="M732 679L746 688" stroke="#d00000" stroke-width="3" /><path d="M754 693l-11-2 4-7z" fill="#d80000" />
            <path d="M715 679L701 688" stroke="#0000b0" stroke-width="3" /><path d="M693 693l11-2-4-7z" fill="#0000d0" />
            <circle cx="723" cy="665" r="4" fill="#14b81c" /><circle cx="715" cy="679" r="4" fill="#1414b8" /><circle cx="732" cy="679" r="4" fill="#e01818" /><circle cx="723" cy="683" r="5" fill="#12c8cc" />
            <g font-family="Liberation Sans, sans-serif" font-size="14" text-anchor="middle"><text x="722" y="644" fill="#0e0">Y</text><text x="753" y="701" fill="#e00">X</text><text x="692" y="701" fill="#00e">Z</text></g>
            <path d="M773 673l3 11-3-1q-1 12-8 20l-2-1q5-8 6-19l-3 1zM723 723l11-5 0 3q10-2 18-8l2 2q-9 8-19 9l1 3z" fill="#fff" stroke="#444" />
          </svg>
        </div>
        {@render strip(rightTools)}
      </div>

      <div class="selection">
        <span class="grip vertical"></span>
        <label>0 selected
          <select><option>all</option></select>
        </label>
      </div>

      <div class="console">
        <div class="dock-title">Console
          <svg class="float" width="12" height="12" viewBox="0 0 12 12"><rect x="1" y="1" width="10" height="10" rx="2" fill="none" stroke="#555" /><path d="M5 3h4v4H5zM3 5h4v4H3z" fill="none" stroke="#555" /></svg><span class="chev"></span>
        </div>
        <div class="console-body">
          <div class="log">
            {#each log as text}
              <div><span class:warn={text.startsWith('WARNING')} class="entry">{text}</span></div>
            {/each}
          </div>
          <button class="alert on" aria-label="Warnings"><svg width="20" height="18" viewBox="0 0 20 18"><path d="M10 1l9 16H1z" fill="none" stroke="#cf940f" stroke-width="1.300" /><path d="M10 6v6M10 13.500v2" stroke="#555" stroke-width="1.500" /></svg></button>
          <button class="alert" aria-label="Messages"><svg width="20" height="20" viewBox="0 0 20 20"><circle cx="10" cy="10" r="8.500" fill="#fff" stroke="#222" stroke-width="1.300" /><path d="M10 5v6M10 13v2" stroke="#e0a040" stroke-width="1.600" /></svg></button>
          <div class="scroll"><span class="cap"><i class="tri-up"></i></span><span class="thumb"></span><span class="cap"><i class="tri-down"></i></span></div>
        </div>
      </div>
    </section>
  </main>
</div>

<style>
  :global(body) {
    margin: 0;
    background: #fff;
    overflow: hidden;
  }
  .app {
    height: 100vh;
    display: flex;
    flex-direction: column;
    font-family: 'Noto Sans', 'Open Sans', sans-serif;
    font-size: 12px;
    color: #151515;
  }
  .app * {
    box-sizing: border-box;
  }
  button,
  input,
  select {
    font: inherit;
    color: inherit;
    margin: 0;
  }
  button {
    border: none;
    background: none;
    padding: 0;
  }
  .icon {
    width: 20px;
    height: 20px;
    flex: none;
    overflow: visible;
  }

  .tabbar {
    display: flex;
    flex: none;
    height: 33px;
    background: #34495f;
  }
  .tabs {
    display: grid;
    grid-template-columns: 64px 93px 95px 137px 113px 98px 80px 100px 92px 166px 30px;
    margin-right: auto;
  }
  .tab {
    color: #cdd3dc;
    font-size: 13px;
    font-weight: 700;
  }
  .file {
    text-align: left;
    padding-left: 15px;
  }
  .selected {
    background: #fafafa;
    color: #34495f;
  }
  .up {
    display: inline-block;
    border: 4px solid transparent;
    border-top: 0;
    border-bottom: 5px solid #cdd3dc;
    margin-bottom: 4px;
  }
  .search {
    width: 180px;
    height: 32px;
    display: flex;
    align-items: center;
    gap: 2px;
    padding-left: 2px;
    background: #1a242d;
    border-radius: 0 0 4px 4px;
  }
  .search input {
    width: 150px;
    border: none;
    padding: 0;
    background: none;
    outline: none;
  }
  .search input::placeholder {
    color: #98a0a8;
  }
  .help {
    width: 18px;
    height: 18px;
    margin: 7px 19px 0 35px;
    border: 1px solid #ccd2dc;
    border-radius: 50%;
    color: #cf940f;
    font-weight: 700;
    line-height: 16px;
  }
  .layout-btn {
    margin: 5px 30px 0 0;
    height: 20px;
  }
  .brand {
    width: 65px;
    background: #000;
    color: #fff;
    display: flex;
    align-items: center;
    justify-content: center;
    font-size: 17px;
    padding-bottom: 3px;
  }
  .brand b {
    line-height: 20px;
  }

  .ribbon {
    display: flex;
    flex: none;
    height: 114px;
    background: #fafafa;
  }
  .group {
    flex: none;
    margin: 4px 0;
    border-right: 1px solid #38424e;
  }
  .group h2 {
    height: 23px;
    margin: 0;
    font-size: 13px;
    line-height: 25px;
    text-align: center;
    color: #2a333d;
  }
  .cols {
    display: grid;
  }
  .col {
    height: 87px;
    display: flex;
    flex-direction: column;
  }
  .mesh { width: 372px; }
  .mesh h2 { padding-right: 7px; }
  .mesh .cols { grid-template-columns: 77px 74px 72px 130px; padding-left: 7px; }
  .mesh .col:last-child { padding-left: 14px; }
  .zones { width: 364px; }
  .zones .cols { grid-template-columns: 110px 113px 116px; padding-left: 13px; }
  .interfaces { width: 107px; }
  .models { width: 145px; }
  .interfaces .cols, .models .cols { padding-left: 13px; }
  .turbo { width: 461px; }
  .turbo .cols { grid-template-columns: 131px 163px 145px; padding-left: 10px; }
  .adapt { width: 220px; }
  .adapt .cols { grid-template-columns: 100px 100px; padding-left: 13px; }
  .surface { width: 108px; }
  .surface .cols { grid-template-columns: 82px; padding-left: 14px; }
  .zones .col:not(:last-child),
  .turbo .col:not(:last-child) {
    padding-right: 15px;
  }
  .tool {
    height: 29px;
    flex: none;
    display: flex;
    align-items: center;
    gap: 4px;
    white-space: nowrap;
  }
  .tool:disabled {
    color: #858585;
  }
  .tool input {
    appearance: none;
    width: 17px;
    height: 17px;
    margin-right: 3px;
    border: 1px solid #b8bcc2;
    background: #fff;
  }
  .interfaces .tool,
  .models .tool,
  .surface .tool {
    height: 43px;
  }
  .interfaces .cols,
  .models .cols,
  .surface .cols {
    padding-top: 1px;
  }
  .down {
    border: 5px solid transparent;
    border-bottom: 0;
    border-top-color: #555;
    margin: 6px 0 0 auto;
  }
  .tool:disabled .down {
    border-top-color: #a0a0a0;
  }
  .surface .down {
    margin-top: 20px;
  }
  .big {
    height: 87px;
    padding-top: 12px;
    display: flex;
    flex-direction: column;
    align-items: center;
    gap: 4px;
  }
  .big-label {
    display: flex;
    align-items: center;
    padding-left: 10px;
  }
  .col:nth-child(3) .big-label {
    gap: 7px;
    padding-left: 17px;
  }

  .workspace {
    flex: 1;
    min-height: 0;
    display: grid;
    grid-template-columns: 456px 551px minmax(0, 1fr);
    gap: 3px;
    padding-top: 3px;
  }
  .dock-title {
    flex: none;
    height: 27px;
    display: flex;
    align-items: center;
    padding: 0 3px 2px 8px;
    background: #bfc4cb;
    color: #5d6f89;
    font-size: 13px;
    font-weight: 700;
  }
  .light {
    background: #eceef0;
    height: 26px;
    padding: 0 5px 0 0;
  }
  .cut {
    margin-left: -2px;
  }
  .chev {
    width: 6px;
    height: 6px;
    margin-left: auto;
    border: solid #333;
    border-width: 0 0 2px 2px;
    transform: rotate(45deg);
  }
  .outline {
    background: #eceef0;
    overflow: hidden;
    min-height: 0;
  }
  .blank {
    height: 27px;
    background: #f3f3f3;
    border-top: 4px solid #fafafa;
  }
  .filter {
    display: block;
    width: 455px;
    height: 31px;
    margin: 12px 0 7px -6px;
    padding: 0 17px;
    border: none;
    border-radius: 16px;
    background: #fafafa;
  }
  .filter::placeholder {
    color: #858585;
  }
  .tree {
    list-style: none;
    margin: 0;
    padding: 0;
  }
  .row {
    height: 22px;
    display: flex;
    align-items: center;
    white-space: nowrap;
  }
  .row .icon {
    margin: 0 6px 0 8px;
  }
  .row-label {
    padding-top: 2px;
  }
  .small {
    height: 18px;
  }
  .mid {
    height: 20px;
  }
  .small .icon {
    width: 13px;
    height: 13px;
    margin-right: 5px;
  }
  .level0 {
    height: 17px;
    font-size: 13px;
    font-weight: 700;
    color: #000;
  }
  .level0 .row-label {
    padding: 0 0 2px;
  }
  .level0 .exp {
    width: 14px;
    height: 14px;
    margin: 0 9px 0 -2px;
  }
  .level1 {
    padding-left: 22px;
  }
  .level2 {
    padding-left: 47px;
  }
  .exp,
  .no-exp {
    width: 16px;
    height: 16px;
    flex: none;
  }
  .exp {
    display: grid;
    place-items: center;
    border: 2px solid #b0b9c2;
    border-radius: 50%;
    background: linear-gradient(#4a5468, #4a5468) center / 6px 2px no-repeat, linear-gradient(#4a5468, #4a5468) center / 2px 6px no-repeat;
  }
  .exp.minus {
    background: linear-gradient(#4a5468, #4a5468) center / 6px 2px no-repeat;
  }

  .task {
    display: flex;
    flex-direction: column;
    border: solid #b4b6ba;
    border-width: 0 1px;
    background: #f4f4f4;
    overflow: hidden;
  }
  .task-body {
    border-top: 1px solid #b4b6ba;
    padding: 15px 0 0 11px;
  }
  .task h3,
  .task h4 {
    margin: 0;
    font-size: 13px;
    line-height: 18px;
    color: #36424f;
  }
  .task .page-title {
    color: #000;
    line-height: 20px;
    margin-bottom: 11px;
  }
  .radios {
    width: 167px;
    height: 52px;
    border: 1px solid #cdd4e2;
    padding: 3px 9px;
  }
  .narrow {
    width: 160px;
  }
  .radios label {
    height: 21px;
    display: flex;
    align-items: center;
    gap: 7px;
    white-space: nowrap;
  }
  .radios input {
    appearance: none;
    width: 16px;
    height: 16px;
    border: 1px solid #8d8d8d;
    border-radius: 50%;
    background: #fff;
  }
  .radios input:checked {
    background: radial-gradient(circle, #444 3px, #fff 4px);
  }
  .compute {
    display: block;
    line-height: 18px;
    margin-bottom: 6px;
  }
  select {
    display: block;
    height: 23px;
    appearance: none;
    border: 1px solid #b6c0cc;
    border-radius: 4px;
    background: #fdfdfd;
  }
  .compute select {
    width: calc(100% + 8px);
  }
  .task .iv {
    margin-top: 5px;
  }
  .values {
    width: 326px;
    height: 303px;
    display: flex;
    border: 1px solid #b4b6ba;
    background: #f0f0f0;
    overflow: hidden;
  }
  .fields {
    width: 309px;
    display: flex;
    flex-direction: column;
    justify-content: flex-end;
    gap: 7px;
    padding: 0 17px 4px 4px;
  }
  .field {
    display: block;
    line-height: 18px;
  }
  .field input {
    display: block;
    width: 288px;
    height: 22px;
    padding: 0 5px;
    border: 1px solid #b0bccb;
    border-radius: 4px;
    background: #fdfdfd;
  }
  .scroll {
    width: 15px;
    display: flex;
    flex-direction: column;
    background: #c0c9cf;
  }
  .cap {
    height: 20px;
    flex: none;
    display: grid;
    place-items: center;
    background: #9dacb4;
  }
  .thumb {
    height: 57px;
    margin-top: auto;
    background: #5b6170;
  }
  .tri-up,
  .tri-down {
    border: 4px solid transparent;
  }
  .tri-up {
    border-top: 0;
    border-bottom: 5px solid #111;
  }
  .tri-down {
    border-bottom: 0;
    border-top: 5px solid #111;
  }
  .actions {
    display: flex;
    gap: 8px;
    padding: 10px 0 17px 2px;
  }
  .more {
    display: grid;
    grid-template-columns: 127px 91px auto;
    row-gap: 8px;
    justify-items: start;
    justify-content: start;
    padding-left: 2px;
  }
  .btn {
    height: 27px;
    padding: 0 3px;
    border: 1px solid #46556b;
    border-radius: 4px;
    background: #f7f7f7;
    white-space: nowrap;
  }
  .btn:disabled {
    background: #d6d8dc;
    border-color: #c3c6ca;
    color: #7b7b7b;
  }

  .right {
    min-height: 0;
    display: flex;
    flex-direction: column;
  }
  .graphics {
    flex: 1;
    min-height: 0;
    display: flex;
  }
  .strip {
    flex: none;
    width: 51px;
    padding-left: 6px;
  }
  .strip:last-child {
    width: 45px;
  }
  .strip-group {
    display: flex;
    flex-direction: column;
    gap: 5px;
    margin-bottom: 6px;
  }
  .grip {
    width: 17px;
    height: 5px;
    margin: 5px 0 2px 12px;
    background: radial-gradient(circle, #aaa 1px, transparent 1px) 0 0 / 3px 3px;
  }
  .view-btn {
    width: 35px;
    height: 35px;
    display: grid;
    place-items: center;
    border: 1px solid #94a3b0;
    border-radius: 4px;
    background: #fff;
  }
  .view-btn .icon {
    width: 22px;
    height: 22px;
  }
  .active {
    width: 39px;
    height: 39px;
    border-width: 3px;
  }
  .view {
    position: relative;
    flex: 1;
    min-width: 0;
    overflow: hidden;
    background: #fafafa;
  }
  .scene {
    position: absolute;
    inset: 0;
    width: 100%;
    height: 100%;
  }
  .view-title {
    position: relative;
    height: 30px;
    display: flex;
    align-items: center;
    justify-content: space-between;
    padding: 0 12px;
    font-size: 13px;
    font-weight: 700;
    color: #2f3a46;
  }
  .logo {
    position: absolute;
    top: 35px;
    right: 7px;
    width: 110px;
    color: #000;
    font-weight: 700;
    text-align: center;
  }
  .logo-name {
    display: flex;
    align-items: flex-start;
    justify-content: flex-end;
    height: 38px;
    font-size: 35px;
    line-height: 32px;
  }
  .logo-name svg {
    flex: none;
    margin-top: 4px;
  }
  .release {
    font-size: 17px;
    line-height: 20px;
    padding-bottom: 2px;
    text-align: right;
    border-bottom: 2px solid #333a46;
  }
  .student {
    font-size: 19px;
    line-height: 26px;
    padding-right: 4px;
  }
  .triad {
    position: absolute;
    right: 21px;
    bottom: 17px;
  }

  .selection {
    flex: none;
    height: 36px;
    display: flex;
    align-items: center;
    justify-content: space-between;
    padding: 0 4px 1px 5px;
  }
  .selection label {
    display: flex;
    align-items: center;
    gap: 4px;
  }
  .selection select {
    width: 165px;
    padding: 0 5px;
    background: linear-gradient(to bottom left, #111 50%, transparent 50%) right 12px center / 5px 5px no-repeat, linear-gradient(to bottom right, #111 50%, transparent 50%) right 7px center / 5px 5px no-repeat, #fdfdfd;
  }
  .selection .vertical {
    width: 6px;
    height: 18px;
    margin: 0;
  }
  .console .float {
    margin-left: auto;
  }
  .float + .chev {
    margin-left: 6px;
  }
  .console .dock-title {
    padding-right: 1px;
  }
  .console-body {
    height: 80px;
    display: flex;
    align-items: flex-start;
    gap: 6px;
    border-left: 1px solid #b4b6ba;
    background: #f7f7f7;
    overflow: hidden;
  }
  .log {
    flex: 1;
    padding: 1px 0 0 7px;
    font-family: 'Liberation Mono', 'Courier New', monospace;
    font-size: 13px;
    line-height: 16px;
    white-space: nowrap;
    overflow: hidden;
  }
  .entry {
    background: #efefef;
  }
  .warn {
    color: #ff5a14;
    background: none;
  }
  .alert {
    width: 32px;
    height: 27px;
    display: grid;
    place-items: center;
    border: 1px solid #b8b8b8;
    border-radius: 3px;
    background: #fafafa;
  }
  .on {
    border: 2px solid;
    border-color: #111 #888 #888 #111;
    border-radius: 0;
    background: #ecf04a;
  }
  .console-body .scroll {
    width: 14px;
    height: 80px;
    margin-left: -5px;
  }
  .console-body .thumb {
    height: 20px;
  }
  .console-body .cap:last-child {
    height: 15px;
  }
</style>
